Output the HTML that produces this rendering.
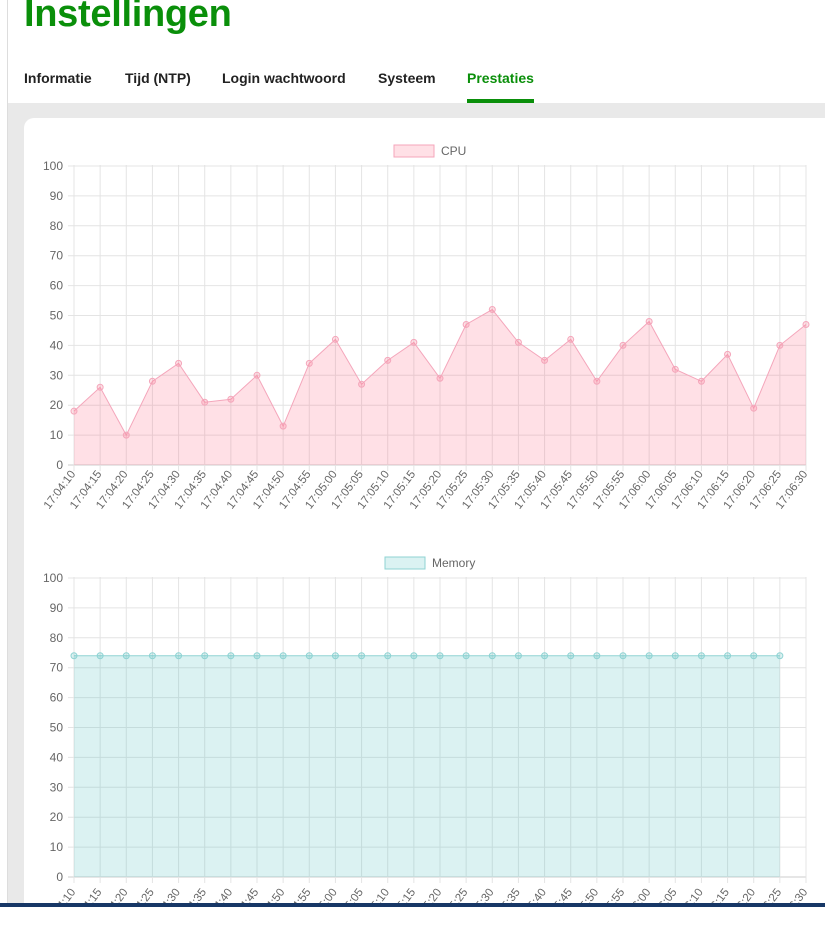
<!DOCTYPE html>
<html><head><meta charset="utf-8"><style>
*{margin:0;padding:0;box-sizing:border-box}
body{width:825px;height:907px;overflow:hidden;background:#fff;font-family:"Liberation Sans",sans-serif;position:relative}
.lb{position:absolute;left:7px;top:0;width:1px;height:907px;background:#ddd}
h1{position:absolute;left:24px;top:-8px;font-size:38px;font-weight:bold;color:#0a8f0a;letter-spacing:-0.3px;line-height:44px}
.tabs{position:absolute;top:70px;left:24px;font-size:14px;font-weight:bold;color:#222}
.tabs span{position:absolute;white-space:nowrap}
.ul{position:absolute;left:467px;top:99px;width:67px;height:4px;background:#0a8f0a}
.gray{position:absolute;left:8px;top:103px;right:0;bottom:0;background:#e9e9e9}
.card{position:absolute;left:24px;top:118px;width:820px;height:820px;background:#fff;border-radius:10px}
svg{position:absolute;left:0;top:0}
.bar{position:absolute;left:0;top:903px;width:825px;height:4px;background:#173766}
</style></head><body>
<div class="lb"></div>
<h1>Instellingen</h1>
<div class="tabs">
<span style="left:0">Informatie</span>
<span style="left:101px">Tijd (NTP)</span>
<span style="left:198px">Login wachtwoord</span>
<span style="left:354px">Systeem</span>
<span style="left:443px;color:#0a8f0a">Prestaties</span>
</div>
<div class="ul"></div>
<div class="gray"></div>
<div class="card"></div>
<svg id="s" width="825" height="907" font-family="Liberation Sans, sans-serif" font-size="11" fill="#666"></svg>
<div class="bar"></div>
<script>
var s=document.getElementById('s'),h='';
var cpu=[18,26,10,28,34,21,22,30,13,34,42,27,35,41,29,47,52,41,35,42,28,40,48,32,28,37,19,40,47];
var labels=[];for(var i=0;i<29;i++){var t=250+i*5;var m=Math.floor(t/60),sc=t%60;labels.push('17:0'+m+':'+(sc<10?'0':'')+sc);}
var x0=74,x1=806,dx=(x1-x0)/28,k=2.99;
function chart(top,data,stroke,fill,name,lx,loff){
 var y0=top+299;
 for(var v=0;v<=100;v+=10){var y=y0-v*k;h+='<line x1="'+(x0-6)+'" x2="'+x1+'" y1="'+y+'" y2="'+y+'" stroke="'+(v==0?'#ccc':'#e4e4e4')+'"/>';h+='<text x="'+(x0-11)+'" y="'+(y+4)+'" text-anchor="end" font-size="12">'+v+'</text>';}
 for(var i=0;i<29;i++){var x=x0+i*dx;h+='<line x1="'+x+'" x2="'+x+'" y1="'+(y0-300)+'" y2="'+(y0+6)+'" stroke="#e4e4e4"/>';h+='<text transform="translate('+(x+2)+','+(y0+9+loff)+') rotate(-53)" text-anchor="end" font-size="11.5">'+labels[i]+'</text>';}
 var p='M'+x0+','+y0;for(var i=0;i<data.length;i++)p+=' L'+(x0+i*dx)+','+(y0-data[i]*k);p+=' L'+(x0+(data.length-1)*dx)+','+y0+' Z';
 h+='<path d="'+p+'" fill="'+fill+'" stroke="none"/>';
 var l='M'+x0+','+(y0-data[0]*k);for(var i=1;i<data.length;i++)l+=' L'+(x0+i*dx)+','+(y0-data[i]*k);
 h+='<path d="'+l+'" fill="none" stroke="'+stroke+'"/>';
 for(var i=0;i<data.length;i++)h+='<circle cx="'+(x0+i*dx)+'" cy="'+(y0-data[i]*k)+'" r="3" fill="'+fill+'" stroke="'+stroke+'"/>';
 h+='<rect x="'+lx+'" y="'+(top-21)+'" width="40" height="12" fill="'+fill+'" stroke="'+stroke+'"/>';
 h+='<text x="'+(lx+47)+'" y="'+(top-11)+'" font-size="12">'+name+'</text>';
}
chart(166,cpu,'#f4a6bb','rgba(255,99,132,0.2)','CPU',394,0);
var mem=[];for(var i=0;i<28;i++)mem.push(74);
chart(578,mem,'#8fd3d3','rgba(75,192,192,0.2)','Memory',385,6);
s.innerHTML=h;
</script>
</body></html>
